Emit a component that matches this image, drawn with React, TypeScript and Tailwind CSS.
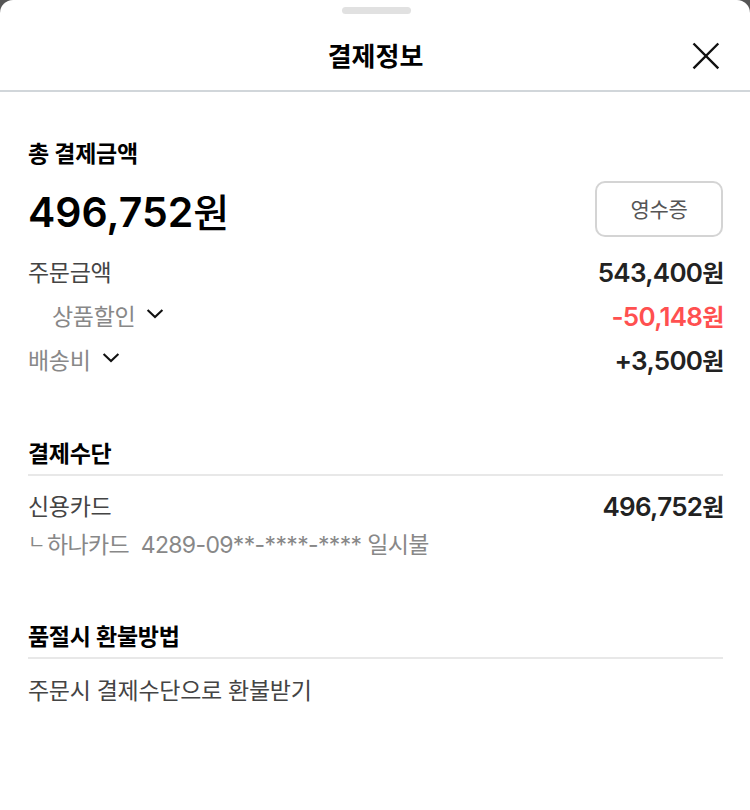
interface ChevronProps {
  className?: string;
}

function ChevronDown({ className = '' }: ChevronProps) {
  return (
    <svg viewBox="0 0 18 12" fill="none" className={`w-[18px] h-3 ${className}`}>
      <path d="M1.6 2 L9 9 L16.4 2" stroke="#111" strokeWidth="2.1" />
    </svg>
  );
}

function CloseIcon() {
  return (
    <svg viewBox="0 0 28 28" fill="none" className="w-7 h-7">
      <path d="M1.5 1.5 L26.3 26.3 M26.3 1.5 L1.5 26.3" stroke="#111" strokeWidth="2.4" />
    </svg>
  );
}

interface AmountProps {
  value: string;
  className?: string;
}

function Amount({ value, className = '' }: AmountProps) {
  return (
    <span className={`flex items-baseline pb-0.5 text-[26px] font-semibold tracking-[-0.7px] ${className}`}>
      {value}
      <span className="self-end text-[24px] leading-[37px] font-semibold tracking-[-1.4px]">원</span>
    </span>
  );
}

export default function App() {
  return (
    <div className="h-[810px] w-full bg-[#555]">
      <div className="flex h-full flex-col rounded-t-[13px] bg-white font-['Inter','Noto_Sans_CJK_KR',sans-serif] text-[#222]">
        <header className="flex h-[92px] flex-col border-b-2 border-[#d1d6da]">
          <div className="ml-[342px] mt-[7px] h-[7px] w-[69px] rounded-full bg-[#e1e1e1]" />
          <div className="relative mt-[25px] flex h-9 items-center justify-center">
            <h1 className="pl-px text-[26px] font-semibold leading-9 text-black">결제정보</h1>
            <button type="button" aria-label="닫기" className="absolute right-[30px] top-[3px]">
              <CloseIcon />
            </button>
          </div>
        </header>

        <main className="pl-7 pr-[27px]">
          {/* Total */}
          <section className="pt-[46px]">
            <h2 className="text-[23px] font-semibold leading-8 tracking-[-0.3px] text-black">총 결제금액</h2>
            <div className="mt-[11px] flex h-14 items-center justify-between">
              <strong className="pt-[6px] text-[41px] font-semibold leading-none text-black">
                496,752<span className="text-[39px] font-medium">원</span>
              </strong>
              <button type="button" className="h-14 w-32 rounded-[10px] border-2 border-[#d4d4d4] pt-0.5 text-[21px] tracking-[-0.4px] text-[#555]">
                영수증
              </button>
            </div>
            <dl className="mt-[14px] text-[23px] tracking-[-0.3px]">
              <div className="flex h-11 items-center justify-between">
                <dt className="text-[#444]">주문금액</dt>
                <dd><Amount value="543,400" /></dd>
              </div>
              <div className="flex h-11 items-center justify-between">
                <dt className="flex items-center pl-6 text-[#888]">
                  상품할인 <ChevronDown className="ml-[11px] mb-[7px]" />
                </dt>
                <dd><Amount value="-50,148" className="text-[#ff5050]" /></dd>
              </div>
              <div className="flex h-[45px] items-center justify-between">
                <dt className="flex items-center text-[#888]">
                  배송비 <ChevronDown className="ml-[11px] mb-[7px]" />
                </dt>
                <dd><Amount value="+3,500" /></dd>
              </div>
            </dl>
          </section>

          {/* Payment method */}
          <section className="mt-[54px]">
            <h2 className="border-b-2 border-[#e8e8e8] pb-1 text-[23px] font-semibold leading-8 tracking-[-0.3px] text-black">결제수단</h2>
            <div className="mt-[9px] flex h-11 items-center justify-between">
              <span className="pt-px text-[23px] tracking-[-0.3px] text-[#444]">신용카드</span>
              <Amount value="496,752" />
            </div>
            <p className="flex h-8 items-center whitespace-pre text-[23px] tracking-[-0.65px] text-[#888]">
              <span className="w-[19px] pb-1 text-[19px]">ㄴ</span>
              <span>하나카드  4289-09**-****-**** 일시불</span>
            </p>
          </section>

          {/* Refund */}
          <section className="mt-[60px]">
            <h2 className="border-b-2 border-[#e8e8e8] pb-1 text-[23px] font-semibold leading-8 tracking-[-0.3px] text-black">품절시 환불방법</h2>
            <p className="mt-[14px] text-[23px] leading-9 tracking-[-0.3px] text-[#444]">주문시 결제수단으로 환불받기</p>
          </section>
        </main>
      </div>
    </div>
  );
}
